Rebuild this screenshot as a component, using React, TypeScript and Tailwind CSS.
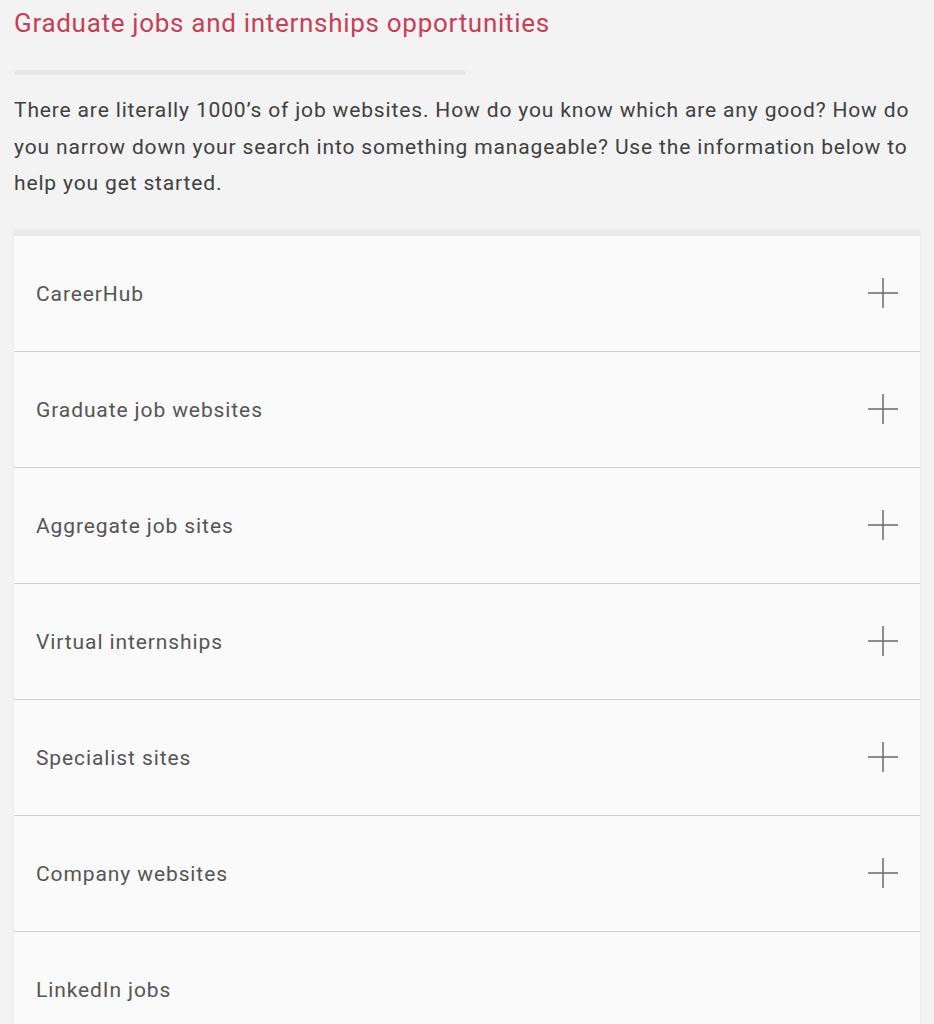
const items = [
  "CareerHub",
  "Graduate job websites",
  "Aggregate job sites",
  "Virtual internships",
  "Specialist sites",
  "Company websites",
  "LinkedIn jobs",
];

function PlusIcon() {
  return (
    <svg width="32" height="32" viewBox="0 0 32 32" className="text-[#6a6a6a]">
      <path d="M16 1v30M1 16h30" stroke="currentColor" strokeWidth="1.5" fill="none" />
    </svg>
  );
}

export default function App() {
  return (
    <div className="h-[1024px] overflow-hidden bg-[#f3f3f3] px-[14px] font-['Roboto',sans-serif]">
      <h1 className="pt-[6px] text-[26px] leading-[34px] tracking-[0.7px] text-[#c63f56]">
        Graduate jobs and internships opportunities
      </h1>
      <div className="mt-[30px] h-[5px] w-[452px] rounded-full bg-[#e7e7e7]" />
      <p className="mt-[17px] w-[904px] text-[21px] leading-[36.5px] tracking-[0.85px] text-[#404040]">
        There are literally 1000’s of job websites. How do you know which are any good? How do
        you narrow down your search into something manageable? Use the information below to
        help you get started.
      </p>
      <div className="mt-[28px] w-[906px] border-t-[6px] border-[#e9e9e9] bg-[#fafafa] shadow-[0_0_3px_rgba(0,0,0,0.06)]">
        {items.map((label, i) => (
          <div
            key={label}
            className="flex h-[116px] items-center justify-between border-b border-[#d3d3d3] pl-[22px] pr-[21px]"
          >
            <span className="mt-[4px] text-[21px] tracking-[0.9px] text-[#555]">{label}</span>
            {i < items.length - 1 && <PlusIcon />}
          </div>
        ))}
      </div>
    </div>
  );
}
